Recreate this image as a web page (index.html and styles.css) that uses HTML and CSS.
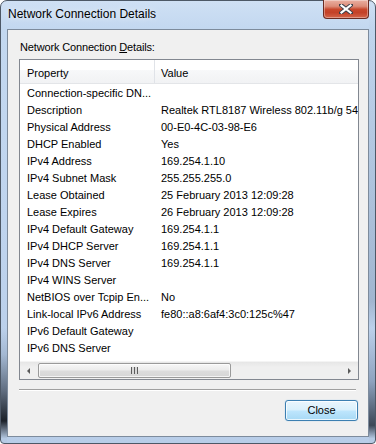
FILE: index.html
```html
<!DOCTYPE html>
<html>
<head>
<meta charset="utf-8">
<link rel="stylesheet" href="styles.css">
</head>
<body>
<div class="window">
  <div class="titlebar">
    <span class="title">Network Connection Details</span>
    <div class="close-x">
      <svg width="14" height="10" viewBox="0 0 14 10">
        <path d="M2 1 L12 9 M12 1 L2 9" stroke="#3b3f4a" stroke-width="4" stroke-linecap="square" fill="none"/>
        <path d="M2.5 1.5 L11.5 8.5 M11.5 1.5 L2.5 8.5" stroke="#ffffff" stroke-width="2.2" stroke-linecap="square" fill="none"/>
      </svg>
    </div>
  </div>
  <div class="client">
    <div class="label">Network Connection <u>D</u>etails:</div>
    <div class="listview">
      <div class="lv-header">
        <span class="hcell c1">Property</span>
        <span class="hcell c2">Value</span>
      </div>
      <div class="lv-body">
        <div class="row"><span class="c1">Connection-specific DN...</span><span class="c2"></span></div>
        <div class="row"><span class="c1">Description</span><span class="c2">Realtek RTL8187 Wireless 802.11b/g 54Mbps USB 2.0 Network Adapter</span></div>
        <div class="row"><span class="c1">Physical Address</span><span class="c2">00-E0-4C-03-98-E6</span></div>
        <div class="row"><span class="c1">DHCP Enabled</span><span class="c2">Yes</span></div>
        <div class="row"><span class="c1">IPv4 Address</span><span class="c2">169.254.1.10</span></div>
        <div class="row"><span class="c1">IPv4 Subnet Mask</span><span class="c2">255.255.255.0</span></div>
        <div class="row"><span class="c1">Lease Obtained</span><span class="c2">25 February 2013 12:09:28</span></div>
        <div class="row"><span class="c1">Lease Expires</span><span class="c2">26 February 2013 12:09:28</span></div>
        <div class="row"><span class="c1">IPv4 Default Gateway</span><span class="c2">169.254.1.1</span></div>
        <div class="row"><span class="c1">IPv4 DHCP Server</span><span class="c2">169.254.1.1</span></div>
        <div class="row"><span class="c1">IPv4 DNS Server</span><span class="c2">169.254.1.1</span></div>
        <div class="row"><span class="c1">IPv4 WINS Server</span><span class="c2"></span></div>
        <div class="row"><span class="c1">NetBIOS over Tcpip En...</span><span class="c2">No</span></div>
        <div class="row"><span class="c1">Link-local IPv6 Address</span><span class="c2">fe80::a8:6af4:3c0:125c%47</span></div>
        <div class="row"><span class="c1">IPv6 Default Gateway</span><span class="c2"></span></div>
        <div class="row"><span class="c1">IPv6 DNS Server</span><span class="c2"></span></div>
      </div>
      <div class="hscroll">
        <div class="sb-btn"><span class="arrow-left"></span></div>
        <div class="track">
          <div class="thumb"><span class="grip"></span></div>
        </div>
        <div class="sb-btn"><span class="arrow-right"></span></div>
      </div>
    </div>
    <div class="sep"></div>
    <div class="footer">
      <button class="btn">Close</button>
    </div>
  </div>
</div>
</body>
</html>
```

FILE: styles.css
```css
html, body {
  margin: 0;
  padding: 0;
}
body {
  width: 376px;
  height: 444px;
  overflow: hidden;
  background: #ffffff;
  font-family: "Liberation Sans", Arial, sans-serif;
}
.window {
  box-sizing: border-box;
  width: 376px;
  height: 444px;
  border: 1px solid #4d5866;
  border-radius: 7px 7px 4px 4px;
  padding: 0 6px 6px 6px;
  display: flex;
  flex-direction: column;
  background:
    linear-gradient(to bottom, rgba(255,255,255,0) 0%, rgba(255,255,255,0) 74%, rgba(120,140,165,0.35) 80%, rgba(60,70,85,0.7) 88%, rgba(10,14,20,0.9) 95%, rgba(180,200,225,0.6) 99%) left top / 6px 100% no-repeat,
    linear-gradient(to bottom, rgba(255,255,255,0) 0%, rgba(110,130,155,0.35) 68%, rgba(255,255,255,0) 74%, rgba(90,110,140,0.45) 86%, rgba(30,38,50,0.8) 96%, rgba(180,200,225,0.6) 99%) right top / 6px 100% no-repeat,
    linear-gradient(to bottom, #cfe0f4 0%, #c3d8f0 6%, #bfd4ee 50%, #b8cde8 100%);
}
.titlebar {
  height: 28px;
  display: flex;
  align-items: flex-start;
  flex: none;
}
.title {
  padding: 5px 0 0 1px;
  font-size: 12px;
  line-height: 16px;
  color: #000000;
  text-shadow: 0 0 6px rgba(255,255,255,0.9);
  white-space: nowrap;
}
.close-x {
  margin-left: auto;
  margin-top: -1px;
  width: 44px;
  height: 18px;
  border: 1px solid #6a2b22;
  border-top: none;
  border-radius: 0 0 4px 4px;
  background: linear-gradient(to bottom, #eab0a2 0%, #dc8c79 35%, #c8472c 52%, #c34128 70%, #d4654a 100%);
  box-shadow: inset 0 0 0 1px rgba(255,255,255,0.35);
  display: flex;
  align-items: center;
  justify-content: center;
}
.close-x svg {
  display: block;
}
.client {
  box-sizing: border-box;
  flex: 1;
  border: 1px solid #7d8b9c;
  background: #f0f0f0;
  padding: 10px 9px 0 11px;
  display: flex;
  flex-direction: column;
}
.label {
  font-size: 11px;
  line-height: 15px;
  color: #000;
  padding-left: 1px;
  letter-spacing: -0.15px;
  white-space: nowrap;
}
.label u {
  text-decoration: underline;
  text-underline-offset: 1px;
}
.listview {
  box-sizing: border-box;
  margin-top: 4px;
  width: 340px;
  height: 321px;
  border: 1px solid #828790;
  background: #ffffff;
  display: flex;
  flex-direction: column;
  overflow: hidden;
}
.lv-header {
  box-sizing: border-box;
  height: 24px;
  flex: none;
  display: grid;
  grid-template-columns: 135px 1fr;
  background: linear-gradient(to bottom, #ffffff 0%, #ffffff 42%, #f7f8f9 46%, #f1f2f4 100%);
  border-bottom: 1px solid #e3e5e8;
}
.hcell {
  font-size: 11px;
  line-height: 18px;
  padding-top: 4px;
  color: #000;
  white-space: nowrap;
}
.hcell.c1 {
  padding-left: 7px;
  border-right: 1px solid #e0e3e8;
}
.hcell.c2 {
  padding-left: 6px;
}
.lv-body {
  flex: 1;
  padding-top: 1px;
  overflow: hidden;
}
.row {
  display: grid;
  grid-template-columns: 135px 1fr;
  height: 17px;
  font-size: 11px;
  line-height: 17px;
  color: #000;
  white-space: nowrap;
}
.row .c1 {
  padding-left: 7px;
  overflow: hidden;
}
.row .c2 {
  padding-left: 6px;
  overflow: visible;
}
.hscroll {
  flex: none;
  height: 17px;
  display: flex;
  background: linear-gradient(to bottom, #e6e6e6 0%, #efefef 30%, #efefef 100%);
  border-top: 1px solid #f4f4f4;
}
.sb-btn {
  width: 17px;
  display: flex;
  align-items: center;
  justify-content: center;
  flex: none;
}
.arrow-left {
  width: 0;
  height: 0;
  border-top: 3.5px solid transparent;
  border-bottom: 3.5px solid transparent;
  border-right: 3.5px solid #5a5a5a;
}
.arrow-right {
  width: 0;
  height: 0;
  border-top: 3.5px solid transparent;
  border-bottom: 3.5px solid transparent;
  border-left: 3.5px solid #5a5a5a;
}
.track {
  flex: 1;
  display: flex;
  align-items: center;
  padding-left: 1px;
}
.thumb {
  box-sizing: border-box;
  width: 193px;
  height: 15px;
  border: 1px solid #9a9a9a;
  border-radius: 2px;
  background: linear-gradient(to bottom, #f7f7f7 0%, #ececec 45%, #dcdcdc 55%, #d6d6d6 100%);
  box-shadow: inset 0 0 0 1px rgba(255,255,255,0.7);
  display: flex;
  align-items: center;
  justify-content: center;
}
.grip {
  width: 7px;
  height: 7px;
  background: repeating-linear-gradient(to right, #5c5c5c 0, #5c5c5c 1px, #d8d8d8 1px, #d8d8d8 3px);
}
.sep {
  margin-top: 9px;
  width: 337px;
  height: 0;
  border-top: 1px solid #a0a0a0;
  border-bottom: 1px solid #ffffff;
}
.footer {
  width: 339px;
  display: flex;
  justify-content: flex-end;
  margin-top: 9px;
}
.btn {
  box-sizing: border-box;
  width: 73px;
  height: 21px;
  padding: 0;
  margin: 0;
  border: 1px solid #3c7fb1;
  border-radius: 3px;
  background: linear-gradient(to bottom, #eaf6fd 0%, #d9f0fc 48%, #bee6fd 52%, #a7d9f5 100%);
  box-shadow: inset 0 0 0 1px rgba(255,255,255,0.75), 0 0 1px rgba(60,160,230,0.6);
  font-family: "Liberation Sans", Arial, sans-serif;
  font-size: 11px;
  line-height: 19px;
  color: #000;
}
```
